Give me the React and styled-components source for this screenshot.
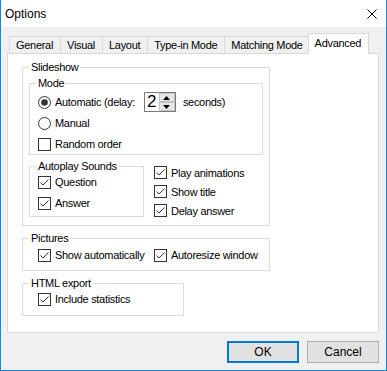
import React from 'react';
import styled, { createGlobalStyle } from 'styled-components';

const GlobalStyle = createGlobalStyle`
    body {
        margin: 0;
        font-family: "Liberation Sans", Arial, sans-serif;
        font-size: 11px;
        letter-spacing: -0.3px;
        color: #000;
    }
`

const Window = styled.div`
    width: 387px;
    height: 371px;
    box-sizing: border-box;
    border: 1px solid #1883d7;
    border-top: none;
    background: #f0f0f0;
    display: flex;
    flex-direction: column;
`

const TitleBar = styled.div`
    height: 27px;
    flex-shrink: 0;
    background: #fff;
    display: flex;
    align-items: center;
    justify-content: space-between;
    padding: 0 9px 0 4px;
    font-size: 12px;
    letter-spacing: 0;
`

const Body = styled.div`
    flex: 1;
    display: flex;
    flex-direction: column;
    padding: 6px 7px 7px 6px;
`

const TabRow = styled.div`
    display: flex;
    align-items: flex-end;
    height: 20px;
    padding-left: 2px;
`

const Tab = styled.div`
    box-sizing: border-box;
    height: ${props => props.$active ? 21 : 17}px;
    display: flex;
    align-items: center;
    padding: 0 7px ${props => props.$active ? 2 : 0}px 6px;
    border: 1px solid #d9d9d9;
    border-bottom: none;
    background: ${props => props.$active ? '#fff' : '#f0f0f0'};
    margin: ${props => props.$active ? '0 -2px -1px -2px' : '0 -1px 0 0'};
    position: relative;
    z-index: ${props => props.$active ? 2 : 1};
`

const Panel = styled.div`
    height: 280px;
    box-sizing: border-box;
    background: #fff;
    border: 1px solid #d9d9d9;
    padding: 13px 0 0 14px;
    display: flex;
    flex-direction: column;
    gap: 12px;
    align-items: flex-start;
`

const Group = styled.div`
    position: relative;
    box-sizing: border-box;
    width: ${props => props.$w}px;
    height: ${props => props.$h}px;
    border: 1px solid #dcdcdc;
    padding: ${props => props.$pad};
    display: flex;
    flex-direction: column;
    flex-shrink: 0;
`

const Legend = styled.span`
    position: absolute;
    top: -8px;
    left: 6px;
    padding: 0 2px;
    line-height: 14px;
    background: #fff;
`

const Item = styled.label`
    display: flex;
    align-items: center;
    gap: 4px;
    height: ${props => props.$h || 20}px;
    white-space: nowrap;
`

const BottomRow = styled.div`
    display: flex;
    align-items: flex-start;
    gap: 10px;
    margin-top: 11px;
`

const Column = styled.div`
    display: flex;
    flex-direction: column;
    margin-top: -3px;
`

const Pair = styled.div`
    display: grid;
    grid-template-columns: 116px auto;
`

const SpinBox = styled.div`
    display: flex;
    box-sizing: border-box;
    width: 32px;
    height: 20px;
    border: 1px solid #7a7a7a;
    background: #fff;
    margin: 0 3px 0 5px;
`

const SpinValue = styled.span`
    flex: 1;
    font-size: 17px;
    line-height: 18px;
    padding-left: 2px;
    letter-spacing: 0;
`

const SpinButtons = styled.div`
    display: flex;
    flex-direction: column;
    width: 16px;
`

const SpinButton = styled.div`
    flex: 1;
    box-sizing: border-box;
    border: 1px solid #c4c4c4;
    background: #e6e6e6;
    display: flex;
    align-items: center;
    justify-content: center;
`

const Footer = styled.div`
    display: flex;
    justify-content: flex-end;
    gap: 8px;
    margin-top: 8px;
`

const Button = styled.button`
    width: 72px;
    height: 22px;
    box-sizing: border-box;
    font: inherit;
    letter-spacing: 0;
    font-size: 12px;
    color: #000;
    background: #e1e1e1;
    border: ${props => props.$primary ? '2px solid #0078d7' : '1px solid #adadad'};
    padding: 0;
`

const CheckBox = () => (
    <svg width="13" height="13" viewBox="0 0 13 13">
        <rect x="0.5" y="0.5" width="12" height="12" fill="#fff" stroke="#333" />
        <polyline points="2.5,6.5 5,9 10.5,3.5" fill="none" stroke="#333" strokeWidth="1" />
    </svg>
)

const EmptyBox = () => (
    <svg width="13" height="13" viewBox="0 0 13 13">
        <rect x="0.5" y="0.5" width="12" height="12" fill="#fff" stroke="#333" />
    </svg>
)

const Radio = ({ checked }) => (
    <svg width="13" height="13" viewBox="0 0 13 13">
        <circle cx="6.5" cy="6.5" r="6" fill="#fff" stroke="#333" />
        {checked && <circle cx="6.5" cy="6.5" r="3.3" fill="#333" />}
    </svg>
)

const Arrow = ({ up }) => (
    <svg width="7" height="4" viewBox="0 0 7 4">
        <polygon points={up ? '0,4 7,4 3.5,0' : '0,0 7,0 3.5,4'} fill="#000" />
    </svg>
)

const tabs = ['General', 'Visual', 'Layout', 'Type-in Mode', 'Matching Mode', 'Advanced'];

export default function App() {
    return (
        <Window>
            <GlobalStyle />
            <TitleBar>
                <span>Options</span>
                <svg width="10" height="10" viewBox="0 0 10 10">
                    <path d="M0.5 0.5 L9.5 9.5 M9.5 0.5 L0.5 9.5" stroke="#000" strokeWidth="1" />
                </svg>
            </TitleBar>
            <Body>
                <TabRow>
                    {tabs.map(t => <Tab key={t} $active={t === 'Advanced'}>{t}</Tab>)}
                </TabRow>
                <Panel>
                    <Group $w={248} $h={159} $pad="15px 0 0 6px">
                        <Legend>Slideshow</Legend>
                        <Group $w={234} $h={72} $pad="8px 0 0 8px">
                            <Legend>Mode</Legend>
                            <Item>
                                <Radio checked />
                                Automatic (delay:
                                <SpinBox>
                                    <SpinValue>2</SpinValue>
                                    <SpinButtons>
                                        <SpinButton><Arrow up /></SpinButton>
                                        <SpinButton><Arrow /></SpinButton>
                                    </SpinButtons>
                                </SpinBox>
                                seconds)
                            </Item>
                            <Item $h={22}><Radio />Manual</Item>
                            <Item><EmptyBox />Random order</Item>
                        </Group>
                        <BottomRow>
                            <Group $w={115} $h={51} $pad="5px 0 0 8px">
                                <Legend>Autoplay Sounds</Legend>
                                <Item><CheckBox />Question</Item>
                                <Item $h={22}><CheckBox />Answer</Item>
                            </Group>
                            <Column>
                                <Item $h={19}><CheckBox />Play animations</Item>
                                <Item $h={19}><CheckBox />Show title</Item>
                                <Item $h={19}><CheckBox />Delay answer</Item>
                            </Column>
                        </BottomRow>
                    </Group>
                    <Group $w={248} $h={33} $pad="6px 0 0 15px">
                        <Legend>Pictures</Legend>
                        <Pair>
                            <Item><CheckBox />Show automatically</Item>
                            <Item><CheckBox />Autoresize window</Item>
                        </Pair>
                    </Group>
                    <Group $w={162} $h={33} $pad="5px 0 0 15px">
                        <Legend>HTML export</Legend>
                        <Item><CheckBox />Include statistics</Item>
                    </Group>
                </Panel>
                <Footer>
                    <Button $primary>OK</Button>
                    <Button>Cancel</Button>
                </Footer>
            </Body>
        </Window>
    );
}
